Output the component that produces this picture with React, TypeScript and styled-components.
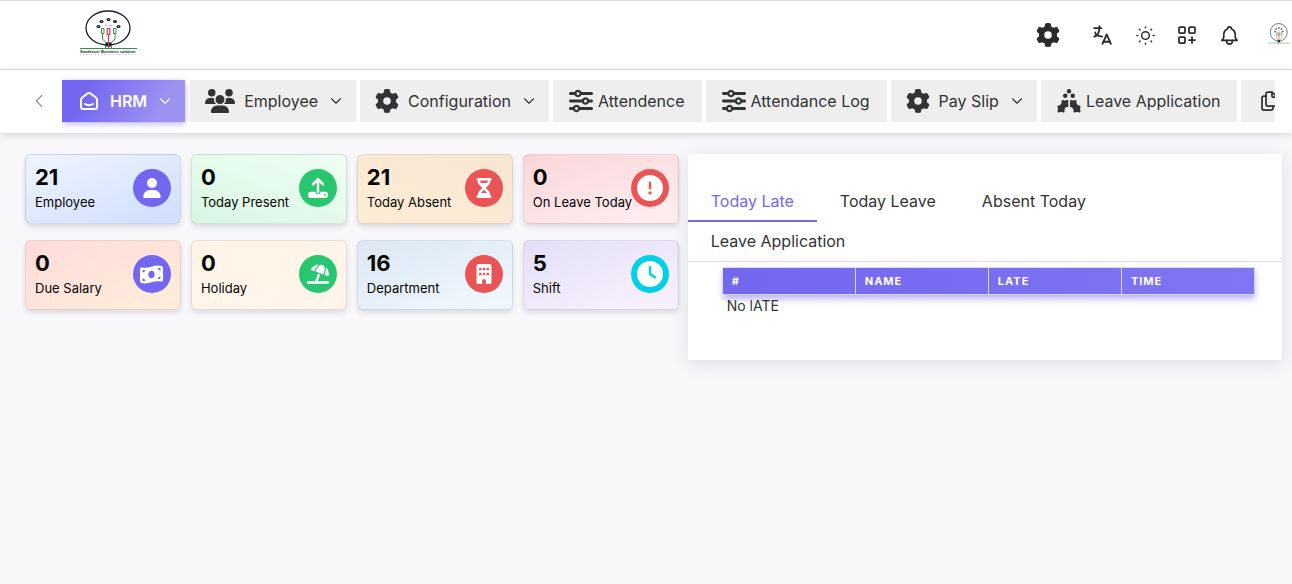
import React from "react";
import styled, { createGlobalStyle, css } from "styled-components";
import {
  FaBuilding,
  FaCircleExclamation,
  FaClock,
  FaGear,
  FaHollyBerry,
  FaHourglassHalf,
  FaMoneyBillWave,
  FaSliders,
  FaUmbrellaBeach,
  FaUpload,
  FaUser,
  FaUsers,
} from "react-icons/fa6";
import {
  TbBell,
  TbChevronDown,
  TbChevronLeft,
  TbFiles,
  TbLanguage,
  TbLayoutGridAdd,
  TbSmartHome,
  TbSun,
} from "react-icons/tb";

const GlobalStyle = createGlobalStyle`
  *, *::before, *::after { box-sizing: border-box; }
  body {
    margin: 0;
    background: #f8f7fa;
    color: #333335;
    font-family: Inter, "Liberation Sans", sans-serif;
    font-size: 16px;
    line-height: 24px;
    overflow-x: hidden;
  }
  button { font: inherit; color: inherit; border: 0; background: none; padding: 0; cursor: pointer; }
`;

const Header = styled.header`
  display: flex;
  align-items: center;
  justify-content: space-between;
  height: 70px;
  padding: 0 1px 0 80px;
  background: #fff;
  border-top: 1px solid #dbdade;
  border-bottom: 1px solid #dbdade;
`;

const BrandLink = styled.a`
  display: block;
  line-height: 0;
  padding-bottom: 4px;
`;

const HeaderActions = styled.div`
  display: flex;
  align-items: center;
  gap: 18px;
  color: #2b2b2e;
`;

const IconButton = styled.button<{ $spaced?: boolean }>`
  display: flex;
  align-items: center;
  justify-content: center;
  min-width: 24px;
  height: 24px;
  margin-right: ${(p) => (p.$spaced ? "12px" : "0")};
`;

const Avatar = styled(IconButton)`
  margin-left: 8px;
`;

const MenuBar = styled.nav`
  display: flex;
  align-items: flex-start;
  height: 63px;
  padding: 0 17px 0 27px;
  background: #fff;
  box-shadow: 0 2px 8px rgba(47, 43, 61, 0.16);
`;

const MenuScroll = styled.button`
  display: flex;
  flex: none;
  align-items: center;
  justify-content: center;
  width: 24px;
  height: 62px;
  margin-right: 11px;
  color: #8d8b94;
`;

const MenuList = styled.ul`
  display: flex;
  flex: 1;
  min-width: 0;
  gap: 4px;
  height: 62px;
  align-items: center;
  margin: 0;
  padding: 0;
  list-style: none;
  overflow: hidden;

  > li {
    flex: none;
  }
`;

const MenuItem = styled.button<{ $active?: boolean; $link?: boolean }>`
  display: flex;
  align-items: center;
  gap: ${(p) => (p.$link ? "5px" : "9px")};
  height: 42px;
  padding: ${(p) => (p.$link ? "0 17px 0 16px" : "0 11px 0 15px")};
  white-space: nowrap;
  background: #eeeeee;
  ${(p) =>
    p.$active &&
    css`
      margin-right: 1px;
      color: #fff;
      font-weight: 600;
      background: linear-gradient(118deg, #7367f0 20%, #9d92f2 80%);
      box-shadow: 0 2px 6px rgba(115, 103, 240, 0.48);
    `}
`;

const Chevron = styled(TbChevronDown)`
  stroke-width: 1.5px;
`;

const Content = styled.main`
  display: grid;
  grid-template-columns: 11fr 10fr;
  gap: 9px;
  align-items: start;
  padding: 21px 10px 24px 25px;
`;

const StatGrid = styled.section`
  display: grid;
  grid-template-columns: repeat(4, 1fr);
  gap: 16px 10px;
`;

const StatCard = styled.article<{ $fill: string }>`
  display: flex;
  align-items: center;
  justify-content: space-between;
  min-width: 0;
  height: 70px;
  padding: 0 9px 2px;
  border: 1px solid rgba(75, 70, 92, 0.13);
  border-radius: 6px;
  background: ${(p) => p.$fill};
  box-shadow: 0 3px 5px rgba(47, 43, 61, 0.13);
  color: #050505;
`;

const StatText = styled.div`
  min-width: 0;
  white-space: nowrap;
`;

const StatValue = styled.div`
  font-size: 22px;
  line-height: 28px;
  font-weight: 700;
`;

const StatLabel = styled.div`
  font-size: 13px;
  line-height: 22px;
`;

const StatBadge = styled.span<{ $color: string }>`
  display: flex;
  flex: none;
  align-items: center;
  justify-content: center;
  width: 38px;
  height: 38px;
  margin-left: -8px;
  border-radius: 50%;
  background: ${(p) => p.$color};
  color: #fff;
`;

const Panel = styled.section`
  min-width: 0;
  min-height: 206px;
  padding-top: 27px;
  background: #fff;
  box-shadow: 0 4px 18px rgba(47, 43, 61, 0.12);
`;

const Tabs = styled.div`
  display: flex;
  flex-wrap: wrap;
  border-bottom: 1px solid #dbdade;
`;

const Tab = styled.button<{ $active?: boolean }>`
  height: 40px;
  padding: 0 23px;
  color: ${(p) => (p.$active ? "#7367f0" : "inherit")};
  box-shadow: ${(p) => (p.$active ? "0 1px 0 #7367f0, inset 0 -1px 0 #7367f0" : "none")};
`;

const TableWrap = styled.div`
  padding: 5px 27px 0 35px;
`;

const Table = styled.table`
  width: 100%;
  table-layout: fixed;
  border-collapse: separate;
  border-spacing: 0;
  font-size: 14px;
`;

const TableHead = styled.thead`
  background: linear-gradient(90deg, #7367f0, #8075f2);
  box-shadow: 0 4px 6px rgba(115, 103, 240, 0.5);
`;

const HeadCell = styled.th`
  height: 28px;
  padding: 0 8px 0 9px;
  border: 1px solid #dbdade;
  border-width: 1px 1px 1px 0;
  text-align: left;
  color: #fff;
  font-size: 11px;
  line-height: 16px;
  font-weight: 700;
  letter-spacing: 1px;
  text-transform: uppercase;
`;

const EmptyCell = styled.td`
  padding: 0 4px;
  line-height: 22px;
`;

function Logo({ width, height, detailed }: { width: number; height: number; detailed?: boolean }) {
  return (
    <svg
      width={width}
      height={height}
      viewBox="0 0 60 46"
      preserveAspectRatio="none"
      fill="none"
      role="img"
      aria-label="Business solution"
    >
      <ellipse cx="28" cy="18" rx="22" ry="17" stroke="#15202e" strokeWidth="1.3" />
      <g stroke="#15202e" strokeWidth="1.2" fill="#9aa4dc">
        <ellipse cx="18.500" cy="16.500" rx="1.500" ry="1" />
        <ellipse cx="21.500" cy="11.500" rx="1.500" ry="1" />
        <ellipse cx="28.500" cy="9.500" rx="1.500" ry="1" />
        <ellipse cx="35" cy="11.500" rx="1.500" ry="1" />
        <ellipse cx="38.500" cy="16.500" rx="1.500" ry="1" />
      </g>
      <path d="M25 15.500h2M29 15.500h3" stroke="#c3b6c2" strokeWidth="1.500" />
      <path d="M21.500 18.500h2.500v5h-2.500zM33.500 18.500h2.500v5h-2.500zM22.500 24v5l4 4M35 24v5l-4 4" stroke="#2f9446" />
      <path d="M27.200 18.500h2.600v6h-2.600zM28.500 24v14" stroke="#dc3545" strokeWidth="1.200" />
      <path d="M25.500 32.500h6v4h-6z" fill="#15202e" />
      <path d="M28.500 32v7" stroke="#dc3545" />
      <path d="M0 38.500h57M25.500 36v3M31.500 36v3" stroke="#2f9446" />
      {detailed && (
        <>
          <text x="0" y="43" fontFamily="Liberation Sans, sans-serif" fontSize="4" fontWeight="700" fill="#15202e">
            Sandroser Business solution
          </text>
          <path d="M0 44.500h57" stroke="#c4c4ca" strokeWidth="1" strokeDasharray="1 2" />
        </>
      )}
    </svg>
  );
}

const menu = [
  { label: "Employee", icon: <FaUsers size={30} />, dropdown: true },
  { label: "Configuration", icon: <FaGear size={24} />, dropdown: true },
  { label: "Attendence", icon: <FaSliders size={24} /> },
  { label: "Attendance Log", icon: <FaSliders size={24} /> },
  { label: "Pay Slip", icon: <FaGear size={24} />, dropdown: true },
  { label: "Leave Application", icon: <FaHollyBerry size={24} /> },
];

const stats = [
  { value: 21, label: "Employee", fill: "linear-gradient(160deg, #eff4ff, #cfdefe)", color: "#7367f0", icon: <FaUser size={20} /> },
  { value: 0, label: "Today Present", fill: "linear-gradient(20deg, #d8f5e2, #effff4)", color: "#28c76f", icon: <FaUpload size={20} /> },
  { value: 21, label: "Today Absent", fill: "linear-gradient(20deg, #feedd5, #f7e5d3)", color: "#ea5455", icon: <FaHourglassHalf size={20} /> },
  { value: 0, label: "On Leave Today", fill: "linear-gradient(160deg, #fad5d9, #fff0f2)", color: "#ea5455", icon: <FaCircleExclamation size={26} /> },
  { value: 0, label: "Due Salary", fill: "linear-gradient(160deg, #ffdbdb, #ffeedb)", color: "#7367f0", icon: <FaMoneyBillWave size={23} /> },
  { value: 0, label: "Holiday", fill: "linear-gradient(160deg, #fff4e6, #fff5eb)", color: "#28c76f", icon: <FaUmbrellaBeach size={22} /> },
  { value: 16, label: "Department", fill: "linear-gradient(160deg, #dce7f3, #f1f9ff)", color: "#ea5455", icon: <FaBuilding size={20} /> },
  { value: 5, label: "Shift", fill: "linear-gradient(160deg, #e5dff6, #f8f2ff)", color: "#00cfe8", icon: <FaClock size={26} /> },
];

const tabs = ["Today Late", "Today Leave", "Absent Today", "Leave Application"];
const columns = ["#", "Name", "Late", "Time"];

export default function App() {
  return (
    <>
      <GlobalStyle />
      <Header>
        <BrandLink href="#" aria-label="Home">
          <Logo width={60} height={46} detailed />
        </BrandLink>
        <HeaderActions>
          <IconButton $spaced aria-label="Settings"><FaGear size={24} /></IconButton>
          <IconButton aria-label="Language"><TbLanguage size={25} strokeWidth={1.75} /></IconButton>
          <IconButton aria-label="Theme"><TbSun size={23} strokeWidth={1.5} /></IconButton>
          <IconButton aria-label="Shortcuts"><TbLayoutGridAdd size={24} strokeWidth={1.75} /></IconButton>
          <IconButton aria-label="Notifications"><TbBell size={23} strokeWidth={1.75} /></IconButton>
          <Avatar aria-label="Account"><Logo width={23} height={24} /></Avatar>
        </HeaderActions>
      </Header>
      <MenuBar aria-label="Main">
        <MenuScroll aria-label="Scroll menu left"><TbChevronLeft size={22} strokeWidth={1.25} /></MenuScroll>
        <MenuList>
          <li>
            <MenuItem $active aria-current="page">
              <TbSmartHome size={24} /> HRM <Chevron size={18} />
            </MenuItem>
          </li>
          {menu.map((item) => (
            <li key={item.label}>
              <MenuItem $link={!item.dropdown}>
                {item.icon}
                {item.label}
                {item.dropdown && <Chevron size={18} />}
              </MenuItem>
            </li>
          ))}
          <li>
            <MenuItem $link aria-label="Documents"><TbFiles size={24} strokeWidth={1.75} /></MenuItem>
          </li>
        </MenuList>
      </MenuBar>
      <Content>
        <StatGrid aria-label="Summary">
          {stats.map((s) => (
            <StatCard key={s.label} $fill={s.fill}>
              <StatText>
                <StatValue>{s.value}</StatValue>
                <StatLabel>{s.label}</StatLabel>
              </StatText>
              <StatBadge $color={s.color}>{s.icon}</StatBadge>
            </StatCard>
          ))}
        </StatGrid>
        <Panel>
          <Tabs role="tablist">
            {tabs.map((t, i) => (
              <Tab key={t} role="tab" aria-selected={i === 0} $active={i === 0}>{t}</Tab>
            ))}
          </Tabs>
          <TableWrap>
            <Table>
              <TableHead>
                <tr>{columns.map((c) => <HeadCell key={c} scope="col">{c}</HeadCell>)}</tr>
              </TableHead>
              <tbody>
                <tr><EmptyCell colSpan={4}>No lATE</EmptyCell></tr>
              </tbody>
            </Table>
          </TableWrap>
        </Panel>
      </Content>
    </>
  );
}
